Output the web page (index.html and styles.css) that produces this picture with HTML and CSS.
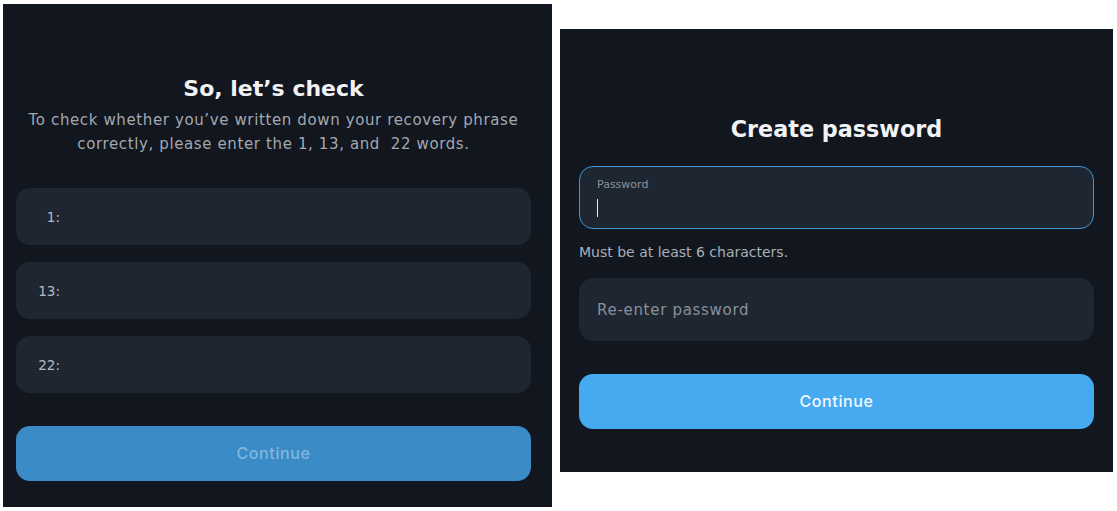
FILE: index.html
```html
<!DOCTYPE html>
<html>
<head>
    <meta charset="UTF-8">
    <meta name="viewport" content="width=device-width, initial-scale=1.0">
    <title>Wallet setup</title>
    <link rel="stylesheet" href="styles.css">
</head>
<body>
    <div class="screens">
        <div class="panel panel-check">
            <h2 class="title">So, let’s check</h2>
            <p class="subtitle">To check whether you’ve written down your recovery phrase<br>correctly, please enter the 1, 13, and &nbsp;22 words.</p>

            <div class="word-list">
                <div class="word-field"><span class="word-num">1:</span></div>
                <div class="word-field"><span class="word-num">13:</span></div>
                <div class="word-field"><span class="word-num">22:</span></div>
            </div>

            <button class="btn btn-disabled">Continue</button>
        </div>

        <div class="panel panel-password">
            <h2 class="title title-lg">Create password</h2>

            <div class="pass-field active">
                <span class="pass-label">Password</span>
                <span class="caret"></span>
            </div>
            <p class="hint">Must be at least 6 characters.</p>

            <div class="pass-field">
                <span class="placeholder">Re-enter password</span>
            </div>

            <button class="btn btn-primary">Continue</button>
        </div>
    </div>
</body>
</html>
```

FILE: styles.css
```css
body {
    margin: 0;
    background: #ffffff;
    font-family: "DejaVu Sans", "Noto Sans", sans-serif;
}

.screens {
    display: flex;
    align-items: flex-start;
    gap: 8px;
    padding: 4px 0 0 3px;
}

.panel {
    background: #11161f;
    box-sizing: border-box;
    display: flex;
    flex-direction: column;
}

.panel-check {
    width: 549px;
    height: 503px;
    padding: 71px 21px 0 13px;
}

.panel-password {
    width: 553px;
    height: 443px;
    margin-top: 25px;
    padding: 86px 19px 0 19px;
}

.title {
    margin: 0;
    color: #f1f2f4;
    font-size: 22px;
    font-weight: 700;
    line-height: 27px;
    text-align: center;
}

.title-lg {
    font-size: 22.3px;
    line-height: 28px;
    margin-bottom: 23px;
}

.subtitle {
    margin: 6px 0 0;
    color: #a3a8b0;
    font-size: 15px;
    line-height: 24px;
    letter-spacing: 0.62px;
    text-align: center;
}

.word-list {
    display: flex;
    flex-direction: column;
    gap: 17px;
    margin-top: 32px;
}

.word-field {
    height: 57px;
    background: #1e2631;
    border-radius: 14px;
    display: flex;
    align-items: center;
}

.word-num {
    width: 44px;
    text-align: right;
    color: #b6bbc3;
    font-size: 13.5px;
}

.btn {
    height: 55px;
    padding: 0 0 2px;
    border: none;
    border-radius: 14px;
    font-family: "Inter", "DejaVu Sans", sans-serif;
    font-size: 16px;
    font-weight: 500;
    letter-spacing: 0.6px;
}

.btn-disabled {
    margin-top: 33px;
    background: #3a8bc6;
    color: #80b7df;
}

.btn-primary {
    margin-top: 33px;
    background: #45aaf0;
    color: #f2f8fd;
}

.pass-field {
    height: 63px;
    box-sizing: border-box;
    background: #1e2631;
    border: 1px solid #1e2631;
    border-radius: 14px;
    padding: 0 17px;
    display: flex;
    flex-direction: column;
    justify-content: center;
}

.pass-field.active {
    border-color: #4196d8;
    justify-content: flex-start;
    padding-top: 11px;
}

.pass-label {
    color: #8c929b;
    font-size: 11px;
    line-height: 14px;
}

.caret {
    width: 1px;
    height: 18px;
    margin-top: 7px;
    background: #e8eaed;
}

.placeholder {
    color: #8a9099;
    font-size: 15px;
    letter-spacing: 0.7px;
}

.hint {
    margin: 15px 0 17px;
    color: #a9afb8;
    font-size: 14px;
    line-height: 17px;
}
```
